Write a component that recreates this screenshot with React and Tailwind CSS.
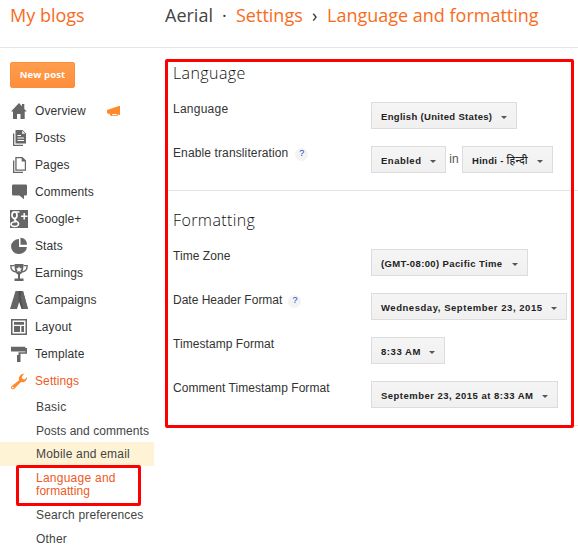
import React from "react";

const Icon = ({ children }) => (
  <svg width="18" height="18" viewBox="0 0 18 18" fill="#666" className="shrink-0">
    {children}
  </svg>
);

const icons = {
  Overview: <path d="M9 1 1 9.500h2V17h4v-5h3.500v5h4.200V9.500h2L14.300 7V2h-2.400v2.200z" />,
  Posts: (
    <>
      <path d="M3 4.500h1.300v11.200H13V17H3z" />
      <path fillRule="evenodd" d="M5.500 1H12.500L16 4.500V14.500H5.500zM7.500 6v1H11V6zm0 2.500v1H14V8.500zm0 2.500v1H14V11zM12.200 1.800v3h3z" />
    </>
  ),
  Pages: (
    <>
      <path d="M3 4.500h1.300v11.200H13V17H3z" />
      <path fillRule="evenodd" d="M5.300 1H12.500L16 4.500V14.700H5.300zM6.600 2.200V13.500H14.800V5.500H11.700V2.200z" />
    </>
  ),
  Comments: <path d="M3.300 1.500h12.400Q17 1.500 17 2.800v8.400q0 1.300-1.300 1.300H14v3.800L9.500 12.500H3.300Q2 12.500 2 11.200V2.800q0-1.300 1.300-1.300z" />,
  "Google+": (
    <>
      <path d="M0 0h18v18H0z" />
      <g fill="none" stroke="#fff">
        <ellipse cx="4.500" cy="5.200" rx="2.500" ry="3.300" strokeWidth="1.700" />
        <path d="M6 2h3.500M5.500 8.500C3.500 10 5 10.300 7 11.700c3 2 1 4.800-2 4.800S0 15 1.500 13c1-1.200 3.500-1.300 4.500-1.300" strokeWidth="1.600" />
        <path d="M14.200 3v6.500M11 6.200h6.500" strokeWidth="1.500" />
      </g>
    </>
  ),
  Stats: (
    <>
      <path d="M9 2v8h8A8 7.500 0 1 1 9 2z" />
      <path d="M10.500.8a6.500 6.500 0 0 1 6.500 6.900h-6.500z" />
    </>
  ),
  Earnings: (
    <>
      <path d="M4.500 0h9c0 5-.8 9.800-3.500 10.500v4h3.500V17h-9v-2.500H8v-4C5.300 9.800 4.500 5 4.500 0z" />
      <path d="M4.500 1.700H.8c0 3 1.500 5.800 5.500 6.300M13.500 1.700h3.700c0 3-1.500 5.800-5.500 6.300" fill="none" stroke="#666" strokeWidth="1.300" />
      <path fill="#fff" d="m9 2.300.9 1.900 2.100.3-1.500 1.500.3 2.100L9 7.100l-1.800 1 .3-2.100L6 4.500l2.100-.3z" />
    </>
  ),
  Campaigns: (
    <>
      <path d="M5.500 0H12v2L7 18H0z" />
      <path d="M8.500 0H13l5 18h-6.500L8.500 9z" fill="#505050" />
      <path d="M11.500 0H13l5 18h-5L10.500 6z" />
    </>
  ),
  Layout: (
    <>
      <path fillRule="evenodd" d="M1 1h16v16H1zM2.500 2.500v13h13v-13z" />
      <path d="M4 4h10v2.800H4zM4 8h6v6H4zM11.300 8H14v6h-2.700z" />
    </>
  ),
  Template: <path d="M1 1.700h14.300v1.300H17v5.700H10.500V17H7V10h1.500V7.200h7V6.400H1z" />,
  Settings: (
    <path
      fill="#ff8a2b"
      d="M1.500 14.300 9 8.200C8.300 5 10.800 1.500 14 1.800L11.800 5l.7 2 2.200.5L17 5c.3 3.500-2.700 6-6 5.100L4.300 16.700c-1.800 1.700-4.400-.6-2.800-2.400zM3 14.700a.8.8 0 1 0 .1 1.500.8.8 0 0 0-.1-1.500z"
    />
  ),
};

const menu = Object.keys(icons);

const Select = ({ children, className = "" }) => (
  <div
    className={`flex h-[27px] shrink-0 items-center justify-between border border-[#dcdcdc] bg-linear-to-b from-[#f5f5f5] to-[#f0f0f0] pl-[9px] pr-[9px] pt-[3px] text-[9.5px] font-bold text-[#222] ${className}`}
  >
    <span className="whitespace-nowrap">{children}</span>
    <svg width="6" height="3" viewBox="0 0 6 3" className="mt-px shrink-0" fill="#555">
      <path d="M0 0h6L3 3z" />
    </svg>
  </div>
);

const Row = ({ label, help, labelClass = "", children }) => (
  <div className="flex h-11 items-start">
    <div className="flex w-[198px] shrink-0 items-center">
      <span className={`whitespace-nowrap text-[12px] leading-[14px] text-[#333] ${labelClass}`}>{label}</span>
      {help && (
        <span className="-mb-0.5 ml-[7px] flex h-[13px] w-[13px] items-center justify-center rounded-full bg-[#f3f3f3] text-[9px] text-[#2244cc]">
          ?
        </span>
      )}
    </div>
    {children}
  </div>
);

export default function App() {
  return (
    <div className="relative h-[549px] w-[578px] overflow-hidden bg-white font-['Liberation_Sans',Arial,sans-serif] text-[#333]">
      <header className="flex h-12 border-b border-[#e5e5e5] pt-[3px] font-['Open_Sans',sans-serif] text-[18px] leading-[25px] text-[#f76c1c]">
        <div className="w-[155px] shrink-0 whitespace-nowrap pl-[10px]">My blogs</div>
        <div className="flex whitespace-nowrap pl-[10px]">
          <span className="w-[57px] text-[#444]">Aerial</span>
          <span className="w-[14px] text-[#333]">·</span>
          <span className="w-[76px]">Settings</span>
          <span className="w-[15px] text-[#333]">›</span>
          <span>Language and formatting</span>
        </div>
      </header>

      <div className="flex">
        <aside className="w-[154px] shrink-0 pt-[14px]">
          <button className="ml-[10px] flex h-[26px] w-[65px] items-center justify-center rounded-[2px] border border-[#fb8f3d] bg-linear-to-b from-[#ff9d4d] to-[#fd8e3b] font-['Open_Sans',sans-serif] text-[9.5px] font-bold tracking-[0.1px] text-white">
            New post
          </button>
          <nav className="mt-[9px] text-[12px] tracking-[0.1px]">
            {menu.map((name) => (
              <div key={name} className="flex h-[27px] items-center pl-[10px]">
                <Icon>{icons[name]}</Icon>
                <span className={name === "Settings" ? "ml-[7px] text-[#ee5a24]" : "ml-[7px]"}>{name}</span>
                {name === "Overview" && (
                  <svg width="13" height="11" viewBox="0 0 13 11" fill="#ff8a2b" className="ml-[21px] mt-[2px]">
                    <path d="M0 4 12 0h1v9h-1l-1-.8-.6 1.800H4L2.500 8 0 7.300zM5 8l.5 1.200h4L9.800 8z" />
                  </svg>
                )}
              </div>
            ))}
          </nav>
          <div className="text-[12px] leading-[13px] tracking-[0.2px] text-[#444]">
            <div className="flex h-6 items-center pl-9 pt-0.5">Basic</div>
            <div className="flex h-6 items-center whitespace-nowrap pl-9 pt-0.5 tracking-[0.05px]">Posts and comments</div>
            <div className="flex h-6 items-center bg-[#fff3d6] pl-9">Mobile and email</div>
            <div className="ml-4 mt-[-1px] h-[41px] w-[125px] rounded-[2px] border-3 border-[#f00] pl-[17px] pt-[4px] text-[#ee5a24]">
              <span className="tracking-[0.25px]">Language and</span>
              <br />
              <span className="tracking-[0.05px]">formatting</span>
            </div>
            <div className="mt-[-3px] flex h-6 items-center pl-9 tracking-[0.15px]">Search preferences</div>
            <div className="flex h-6 items-center pl-9">Other</div>
          </div>
        </aside>

        <main className="relative ml-[11px] h-[378px] w-[413px] shrink-0 border-b border-[#e5e5e5] pl-2">
          <h2 className="h-[54px] pt-[13px] font-['Open_Sans',sans-serif] text-[16px] font-light leading-6 tracking-[0.4px] text-[#111]">Language</h2>
          <Row label="Language" labelClass="tracking-[0.25px]">
            <Select className="w-[146px] tracking-[0.32px]">English (United States)</Select>
          </Row>
          <Row label="Enable transliteration" labelClass="tracking-[0.12px]" help>
            <Select className="w-[75px] tracking-[0.5px]">Enabled</Select>
            <span className="w-4 shrink-0 pt-[4px] text-center text-[12px] text-[#555]">in</span>
            <Select className="w-[91px] tracking-[0.3px]">
              Hindi - <span className="font-['Noto_Sans',sans-serif] text-[10.5px] font-medium leading-3">हिन्दी</span>
            </Select>
          </Row>
          <div className="-ml-2 h-px bg-[#e5e5e5]" />
          <h2 className="h-[58px] pt-[17px] font-['Open_Sans',sans-serif] text-[16px] font-light leading-6 tracking-[0.4px] text-[#111]">Formatting</h2>
          <Row label="Time Zone" labelClass="tracking-[0.05px]">
            <Select className="w-[157px] tracking-[0.38px]">(GMT-08:00) Pacific Time</Select>
          </Row>
          <Row label="Date Header Format" labelClass="-mr-px" help>
            <Select className="w-[196px] tracking-[0.54px]">Wednesday, September 23, 2015</Select>
          </Row>
          <Row label="Timestamp Format" labelClass="tracking-[0.06px]">
            <Select className="w-[74px] tracking-[0.55px]">8:33 AM</Select>
          </Row>
          <Row label="Comment Timestamp Format" labelClass="tracking-[0.05px]">
            <Select className="w-[187px] tracking-[0.48px]">September 23, 2015 at 8:33 AM</Select>
          </Row>
          <div className="absolute left-0 top-[11px] h-[369px] w-[409px] rounded-[2px] border-3 border-[#f00]" />
        </main>
      </div>
    </div>
  );
}
